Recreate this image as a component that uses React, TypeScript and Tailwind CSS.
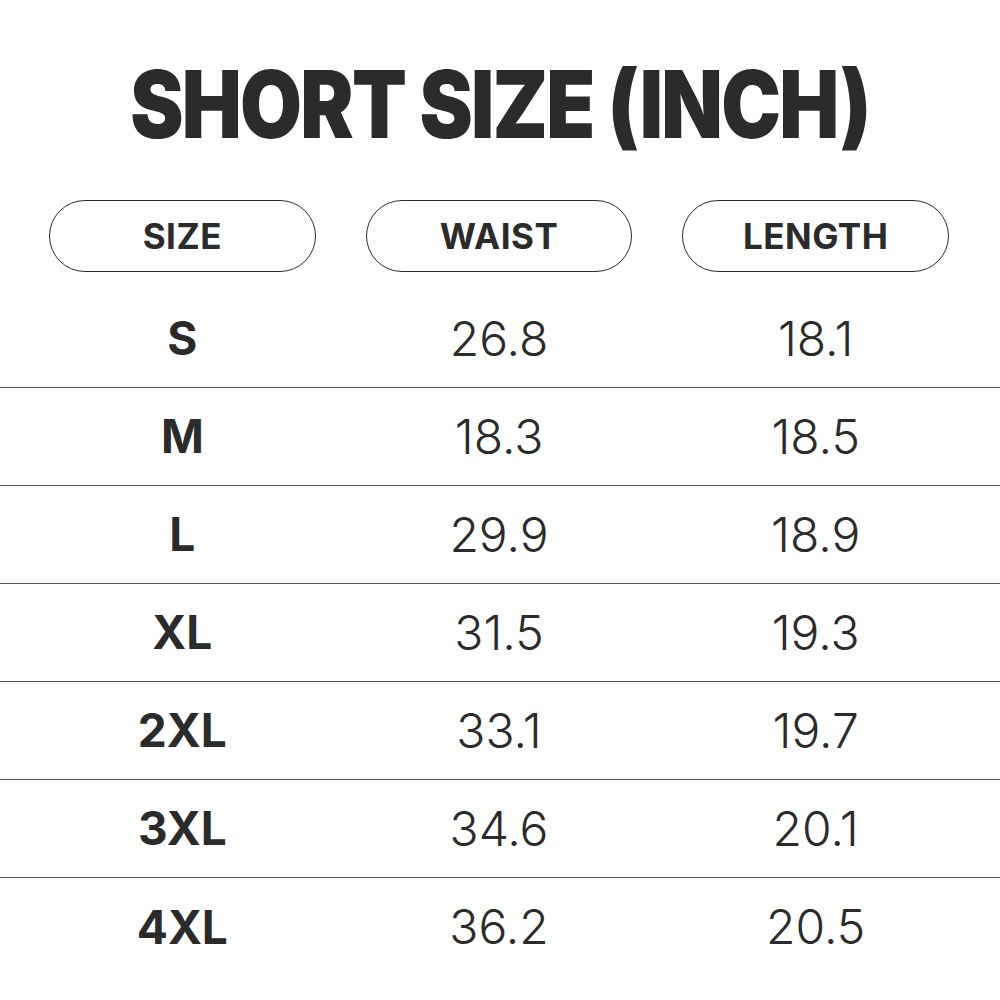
const rows = [
  ["S", "26.8", "18.1"],
  ["M", "18.3", "18.5"],
  ["L", "29.9", "18.9"],
  ["XL", "31.5", "19.3"],
  ["2XL", "33.1", "19.7"],
  ["3XL", "34.6", "20.1"],
  ["4XL", "36.2", "20.5"],
];

const headers = ["SIZE", "WAIST", "LENGTH"];

export default function App() {
  return (
    <div className="w-[1000px] h-[1000px] bg-white text-[#2b2b2b] font-['Inter',sans-serif] flex flex-col">
      {/* Title */}
      <div className="h-[200px] flex items-center justify-center pt-[8px]">
        <h1 className="text-[93px] font-black tracking-[-2px] leading-none scale-x-[0.86] whitespace-nowrap">
          SHORT SIZE (INCH)
        </h1>
      </div>

      {/* Header pills */}
      <div className="grid grid-cols-3 gap-[50px] pl-[49px] pr-[51px] h-[90px] items-start">
        {headers.map((h) => (
          <div
            key={h}
            className="h-[72px] rounded-full border-[1.5px] border-[#2b2b2b] flex items-center justify-center text-[35px] font-bold tracking-[0.5px]"
          >
            {h}
          </div>
        ))}
      </div>

      {/* Rows */}
      <div className="flex flex-col">
        {rows.map((r, i) => (
          <div
            key={r[0]}
            className={`h-[98px] grid grid-cols-3 gap-[50px] pl-[49px] pr-[51px] items-center ${
              i < rows.length - 1 ? "border-b border-[#555555]" : ""
            }`}
          >
            <div className="text-center text-[46px] font-bold">{r[0]}</div>
            <div className="text-center text-[48px] font-light">{r[1]}</div>
            <div className="text-center text-[48px] font-light">{r[2]}</div>
          </div>
        ))}
      </div>
    </div>
  );
}
